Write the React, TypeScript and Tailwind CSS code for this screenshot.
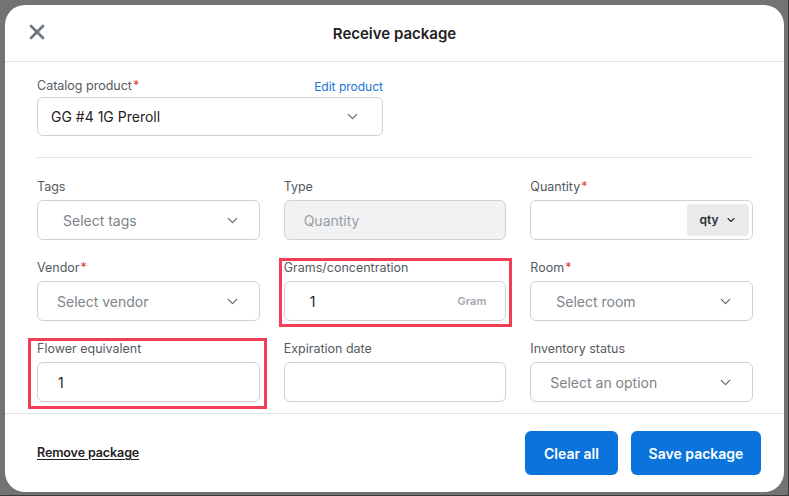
import { ChevronDown, X } from 'lucide-react';

const font = { fontFamily: 'Inter, "Noto Sans", sans-serif' };

function Label({ text, required }: { text: string; required?: boolean }) {
  return (
    <div className="h-[16px] mb-[5px] pt-[1px] flex items-center text-[12.5px] text-[#555a60] leading-none">
      {text}
      {required && <span className="text-[#e5383b] ml-[1px]">*</span>}
    </div>
  );
}

function SelectBox({ placeholder, pl }: { placeholder: string; pl: string }) {
  return (
    <div className={`h-[40px] rounded-[6px] border border-[#cfd1d4] bg-white flex items-center justify-between ${pl} pr-[18px]`}>
      <span className="text-[14px] text-[#7d8389]">{placeholder}</span>
      <ChevronDown size={17} strokeWidth={1.6} className="text-[#5a5f65]" />
    </div>
  );
}

export default function App() {
  return (
    <div className="w-[789px] h-[496px] bg-[#737373] border-r border-b border-[#3a3a3a] pt-[5px] pl-[5px] overflow-hidden" style={font}>
      <div className="w-[779px] h-[487px] bg-white rounded-[20px] flex flex-col overflow-hidden">
        {/* Header */}
        <div className="h-[57px] shrink-0 border-b border-[#e2e3e5] relative flex items-center justify-center">
          <X size={24} strokeWidth={2.6} className="absolute left-[20px] top-[15px] text-[#6e757c]" />
          <h1 className="text-[15px] font-semibold text-[#1f2124] pt-[2px]">Receive package</h1>
        </div>

        {/* Body */}
        <div className="h-[352px] shrink-0 overflow-hidden pl-[32px] pr-[31px] pt-[16px] border-b border-[#e2e3e5]">
          <div className="w-[346px]">
            <div className="h-[16px] mb-[3px] pt-[1px] flex items-center justify-between text-[12.5px] leading-none">
              <span className="text-[#555a60]">
                Catalog product<span className="text-[#e5383b] ml-[1px]">*</span>
              </span>
              <span className="text-[#1a73d9] text-[12px]">Edit product</span>
            </div>
            <div className="h-[39px] rounded-[6px] border border-[#cfd1d4] flex items-center justify-between pl-[13px] pr-[21px]">
              <span className="text-[14px] text-[#1f2124]">GG #4 1G Preroll</span>
              <ChevronDown size={17} strokeWidth={1.6} className="text-[#5a5f65]" />
            </div>
          </div>

          <div className="mt-[21px] border-t border-[#e2e3e5]" />

          <div className="pt-[21px] grid grid-cols-3 gap-x-[24px] gap-y-[20px]">
            <div>
              <Label text="Tags" />
              <SelectBox placeholder="Select tags" pl="pl-[25px]" />
            </div>
            <div>
              <Label text="Type" />
              <div className="h-[40px] rounded-[6px] border border-[#cfd1d4] bg-[#f1f2f3] flex items-center pl-[19px]">
                <span className="text-[14px] text-[#9a9fa4]">Quantity</span>
              </div>
            </div>
            <div>
              <Label text="Quantity" required />
              <div className="h-[40px] rounded-[6px] border border-[#cfd1d4] flex items-center justify-end pr-[3px]">
                <div className="h-[32px] w-[62px] rounded-[4px] bg-[#e9eaec] flex items-center justify-center gap-[6px]">
                  <span className="text-[12px] font-semibold text-[#2a2d31]">qty</span>
                  <ChevronDown size={12} strokeWidth={2.2} className="text-[#2a2d31]" />
                </div>
              </div>
            </div>

            <div>
              <Label text="Vendor" required />
              <SelectBox placeholder="Select vendor" pl="pl-[19px]" />
            </div>
            <div className="relative">
              <div className="absolute left-[-5px] top-[-2px] w-[233px] h-[69px] border-[3px] border-[#f03f55] pointer-events-none" />
              <Label text="Grams/concentration" />
              <div className="h-[40px] rounded-[6px] border border-[#cfd1d4] flex items-center justify-between pl-[25px] pr-[19px]">
                <span className="text-[14px] text-[#1f2124]">1</span>
                <span className="text-[11px] font-semibold text-[#a3a7ab]">Gram</span>
              </div>
            </div>
            <div>
              <Label text="Room" required />
              <SelectBox placeholder="Select room" pl="pl-[25px]" />
            </div>

            <div className="relative">
              <div className="absolute left-[-9px] top-[-3px] w-[239px] h-[71px] border-[3px] border-[#f03f55] pointer-events-none" />
              <Label text="Flower equivalent" />
              <div className="h-[40px] rounded-[6px] border border-[#cfd1d4] flex items-center pl-[20px]">
                <span className="text-[14px] text-[#1f2124]">1</span>
              </div>
            </div>
            <div>
              <Label text="Expiration date" />
              <div className="h-[40px] rounded-[6px] border border-[#cfd1d4]" />
            </div>
            <div>
              <Label text="Inventory status" />
              <SelectBox placeholder="Select an option" pl="pl-[19px]" />
            </div>
          </div>
        </div>

        {/* Footer */}
        <div className="flex-1 flex items-center justify-between pl-[32px] pr-[23px]">
          <span className="text-[12.5px] font-semibold text-[#1f2124] underline underline-offset-2 tracking-[-0.1px]">Remove package</span>
          <div className="flex gap-[13px]">
            <button className="h-[44px] w-[93px] rounded-[6px] bg-[#0a74dc] text-white text-[14px] font-semibold">Clear all</button>
            <button className="h-[44px] w-[130px] rounded-[6px] bg-[#0a74dc] text-white text-[14px] font-semibold">Save package</button>
          </div>
        </div>
      </div>
    </div>
  );
}
